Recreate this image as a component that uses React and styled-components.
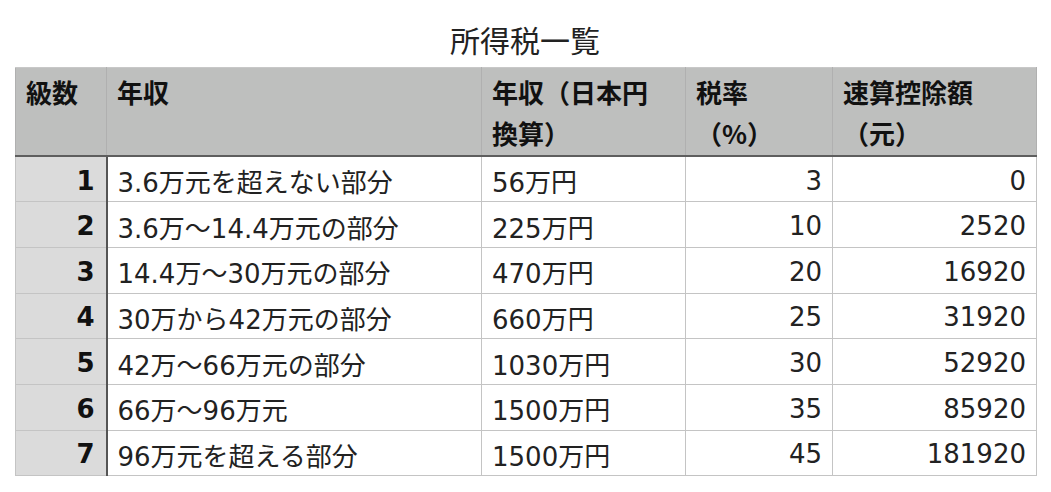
import React from "react";
import styled, { createGlobalStyle } from "styled-components";

const GlobalStyle = createGlobalStyle`
  html, body {
    margin: 0;
    padding: 0;
    background: #fff;
  }
  body {
    font-family: "Noto Sans CJK JP", "Noto Sans", sans-serif;
    color: #1e1e1e;
  }
`;

const Page = styled.div`
  width: 1051px;
  padding: 0 0 0 15px;
  box-sizing: border-box;
`;

const Title = styled.h1`
  margin: 0;
  width: 1020px;
  height: 67px;
  line-height: 78px;
  text-align: center;
  font-size: 30px;
  font-weight: 400;
  color: #222;
`;

const Table = styled.table`
  border-collapse: collapse;
  table-layout: fixed;
  width: 1021px;
  font-size: 26px;
`;

const Head = styled.th`
  background: #bebfbe;
  border: 1px solid #b0b0b0;
  border-top: 1px solid #c8c8c8;
  border-bottom: 2px solid #5e5e5e;
  padding: 3px 10px 2px;
  height: 80px;
  line-height: 41px;
  text-align: left;
  vertical-align: top;
  font-weight: 700;
  color: #111;
  white-space: nowrap;
`;

const Row = styled.tr`
  height: 45.7px;
`;

const Num = styled.td`
  background: #dbdbdb;
  border: 1px solid #c4c4c4;
  border-right: 2px solid #555;
  padding: 3px 11px 0 10px;
  text-align: right;
  font-family: "DejaVu Sans", "Noto Sans CJK JP", sans-serif;
  font-weight: 700;
  color: #111;
`;

const Cell = styled.td`
  border: 1px solid #c4c4c4;
  padding: 3px 10px 0 10px;
  text-align: ${(p) => (p.right ? "right" : "left")};
  font-family: "DejaVu Sans", "Noto Sans CJK JP", sans-serif;
  font-weight: 400;
  color: #222;
  white-space: nowrap;
`;

const rows = [
  ["1", "3.6万元を超えない部分", "56万円", "3", "0"],
  ["2", "3.6万〜14.4万元の部分", "225万円", "10", "2520"],
  ["3", "14.4万〜30万元の部分", "470万円", "20", "16920"],
  ["4", "30万から42万元の部分", "660万円", "25", "31920"],
  ["5", "42万〜66万元の部分", "1030万円", "30", "52920"],
  ["6", "66万〜96万元", "1500万円", "35", "85920"],
  ["7", "96万元を超える部分", "1500万円", "45", "181920"],
];

export default function App() {
  return (
    <>
      <GlobalStyle />
      <Page>
        <Title>所得税一覧</Title>
        <Table>
          <colgroup>
            <col style={{ width: 91 }} />
            <col style={{ width: 375 }} />
            <col style={{ width: 204 }} />
            <col style={{ width: 147 }} />
            <col style={{ width: 204 }} />
          </colgroup>
          <thead>
            <tr>
              <Head>級数</Head>
              <Head>年収</Head>
              <Head>
                年収（日本円
                <br />
                換算）
              </Head>
              <Head>
                税率
                <br />
                （%）
              </Head>
              <Head>
                速算控除額
                <br />
                （元）
              </Head>
            </tr>
          </thead>
          <tbody>
            {rows.map((r) => (
              <Row key={r[0]}>
                <Num>{r[0]}</Num>
                <Cell>{r[1]}</Cell>
                <Cell>{r[2]}</Cell>
                <Cell right>{r[3]}</Cell>
                <Cell right>{r[4]}</Cell>
              </Row>
            ))}
          </tbody>
        </Table>
      </Page>
    </>
  );
}
